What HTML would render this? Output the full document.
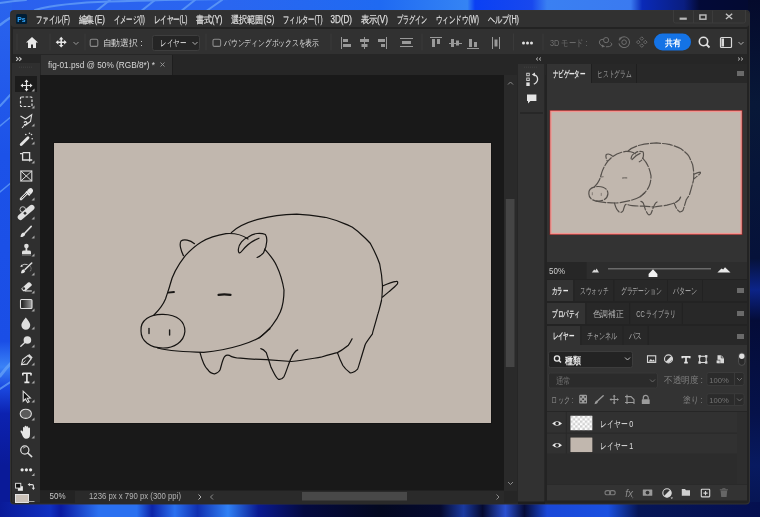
<!DOCTYPE html>
<html><head><meta charset="utf-8"><style>
html,body{margin:0;padding:0;background:#0a2090;overflow:hidden;width:760px;height:517px}
svg{display:block;will-change:transform}
text{font-family:"Liberation Sans",sans-serif}
</style></head><body>
<svg width="760" height="517" viewBox="0 0 760 517">
<defs>
<linearGradient id="wpL" x1="0" y1="0" x2="0" y2="1">
 <stop offset="0" stop-color="#2a64ee"/><stop offset="0.3" stop-color="#1c52e8"/><stop offset="0.66" stop-color="#1a4ee6"/><stop offset="0.71" stop-color="#3a82f6"/><stop offset="0.75" stop-color="#1a48e0"/><stop offset="0.8" stop-color="#0c22b0"/><stop offset="0.9" stop-color="#0a1a98"/><stop offset="1" stop-color="#0a1a98"/></linearGradient>
<linearGradient id="wpB" x1="0" y1="0" x2="1" y2="0">
 <stop offset="0" stop-color="#0a1a98"/><stop offset="0.066" stop-color="#1030c0"/><stop offset="0.08" stop-color="#0a1aa0"/><stop offset="0.13" stop-color="#2a70f0"/><stop offset="0.18" stop-color="#2a70f0"/><stop offset="0.2" stop-color="#0c24a8"/><stop offset="0.23" stop-color="#2a70f0"/><stop offset="0.26" stop-color="#1030b0"/><stop offset="0.3" stop-color="#3080f5"/><stop offset="0.34" stop-color="#0a1a90"/><stop offset="0.4" stop-color="#040a40"/><stop offset="0.5" stop-color="#030820"/><stop offset="0.58" stop-color="#050a30"/><stop offset="0.61" stop-color="#1a3aa0"/><stop offset="0.635" stop-color="#050a30"/><stop offset="0.665" stop-color="#2a50d0"/><stop offset="0.69" stop-color="#060c38"/><stop offset="0.72" stop-color="#1a48d8"/><stop offset="0.8" stop-color="#1a50e0"/><stop offset="0.84" stop-color="#061656"/><stop offset="1" stop-color="#051050"/></linearGradient>
<linearGradient id="wpT" x1="0" y1="0" x2="1" y2="0">
 <stop offset="0" stop-color="#2a60ee"/><stop offset="0.3" stop-color="#2a66f0"/><stop offset="0.5" stop-color="#1f6af2"/><stop offset="0.615" stop-color="#3584f4"/><stop offset="0.625" stop-color="#0a40f4"/><stop offset="0.7" stop-color="#1848ee"/><stop offset="0.72" stop-color="#3a80f2"/><stop offset="0.83" stop-color="#3a7af0"/><stop offset="0.845" stop-color="#0a2ab8"/><stop offset="0.9" stop-color="#0a1e80"/><stop offset="0.92" stop-color="#030a38"/><stop offset="1" stop-color="#030a30"/></linearGradient>
<linearGradient id="wpR" x1="0" y1="0" x2="0" y2="1">
 <stop offset="0" stop-color="#040a2c"/><stop offset="0.2" stop-color="#081838"/><stop offset="0.5" stop-color="#06123a"/><stop offset="0.56" stop-color="#0c2488"/><stop offset="0.62" stop-color="#040c38"/><stop offset="0.8" stop-color="#06124a"/><stop offset="0.9" stop-color="#081a60"/><stop offset="1" stop-color="#061450"/></linearGradient>
</defs>
<rect x="0" y="0" width="760" height="517" fill="#0a2090" />
<rect x="0" y="0" width="760" height="12" fill="url(#wpT)" />
<rect x="0" y="0" width="12" height="517" fill="url(#wpL)" />
<rect x="748" y="0" width="12" height="517" fill="url(#wpR)" />
<rect x="0" y="502" width="760" height="15" fill="url(#wpB)" />
<g fill="none" stroke="#6aa6f8" opacity="0.7" stroke-linecap="round"><path d="M35 10 Q60 3 110 1.5 T230 -1" stroke-width="2"/><path d="M0 3 Q12 1 26 0" stroke-width="2"/><path d="M0 25 Q5 21 10 18" stroke-width="2.5"/><path d="M0 106 L12 93" stroke-width="2"/><path d="M0 126 L12 116" stroke-width="1.5"/><path d="M0 192 L12 182" stroke-width="1.5"/><path d="M0 376 Q6 368 12 362" stroke-width="3"/><path d="M0 389 L12 381" stroke-width="2"/><path d="M95 12 L110 0" stroke-width="2"/><path d="M140 12 L155 0" stroke-width="2"/><path d="M180 12 L195 0" stroke-width="2"/><path d="M205 12 L222 0" stroke-width="2"/></g>
<rect x="10" y="10" width="740" height="494.5" fill="#333333" rx="4"/>
<rect x="11" y="11" width="738" height="492.5" fill="#232323" rx="3"/>
<rect x="11" y="11" width="738" height="16" fill="#313131" rx="3"/>
<rect x="16" y="14" width="11" height="10" fill="#001e36" rx="1.5"/>
<text x="17.3" y="22.2" font-size="7.5" fill="#31a8ff" textLength="8.4" lengthAdjust="spacingAndGlyphs" font-weight="bold" >Ps</text>
<text x="36" y="23" font-size="10" fill="#dedede" textLength="34" lengthAdjust="spacingAndGlyphs" stroke="#dedede" stroke-width="0.25">ファイル(F)</text>
<text x="78.5" y="23" font-size="10" fill="#dedede" textLength="26.5" lengthAdjust="spacingAndGlyphs" stroke="#dedede" stroke-width="0.25">編集(E)</text>
<text x="113.5" y="23" font-size="10" fill="#dedede" textLength="31.5" lengthAdjust="spacingAndGlyphs" stroke="#dedede" stroke-width="0.25">イメージ(I)</text>
<text x="153.5" y="23" font-size="10" fill="#dedede" textLength="34.0" lengthAdjust="spacingAndGlyphs" stroke="#dedede" stroke-width="0.25">レイヤー(L)</text>
<text x="195.5" y="23" font-size="10" fill="#dedede" textLength="27.0" lengthAdjust="spacingAndGlyphs" stroke="#dedede" stroke-width="0.25">書式(Y)</text>
<text x="231" y="23" font-size="10" fill="#dedede" textLength="43.5" lengthAdjust="spacingAndGlyphs" stroke="#dedede" stroke-width="0.25">選択範囲(S)</text>
<text x="283" y="23" font-size="10" fill="#dedede" textLength="39.5" lengthAdjust="spacingAndGlyphs" stroke="#dedede" stroke-width="0.25">フィルター(T)</text>
<text x="330.5" y="23" font-size="10" fill="#dedede" textLength="21.5" lengthAdjust="spacingAndGlyphs" stroke="#dedede" stroke-width="0.25">3D(D)</text>
<text x="360.5" y="23" font-size="10" fill="#dedede" textLength="27.5" lengthAdjust="spacingAndGlyphs" stroke="#dedede" stroke-width="0.25">表示(V)</text>
<text x="397" y="23" font-size="10" fill="#dedede" textLength="30.5" lengthAdjust="spacingAndGlyphs" stroke="#dedede" stroke-width="0.25">プラグイン</text>
<text x="435.5" y="23" font-size="10" fill="#dedede" textLength="43.5" lengthAdjust="spacingAndGlyphs" stroke="#dedede" stroke-width="0.25">ウィンドウ(W)</text>
<text x="487.5" y="23" font-size="10" fill="#dedede" textLength="31.5" lengthAdjust="spacingAndGlyphs" stroke="#dedede" stroke-width="0.25">ヘルプ(H)</text>
<g stroke="#3c3c3c" fill="none" stroke-width="1"><path d="M673.5 10 V21 Q673.5 23 675.5 23 H743.5 Q745.5 23 745.5 21 V10 M693.5 10.5 V23 M712.5 10.5 V23"/></g>
<rect x="679.6" y="17.6" width="7.2" height="2.2" fill="#b8b8b8" />
<rect x="699.9" y="15" width="6" height="4.2" fill="none" stroke="#b8b8b8" stroke-width="1.5"/>
<path d="M725.9 13.7 L732.2 18.9 M732.2 13.7 L725.9 18.9" stroke="#c4c4c4" fill="none" stroke-width="1.3" />
<rect x="13" y="29" width="734" height="25.3" fill="#313131" />
<rect x="16.5" y="33.5" width="1" height="17" fill="#3a3a3a" />
<rect x="49.5" y="33.5" width="1" height="17" fill="#3a3a3a" />
<rect x="84.5" y="33.5" width="1" height="17" fill="#3a3a3a" />
<rect x="205.5" y="33.5" width="1" height="17" fill="#3a3a3a" />
<rect x="330.5" y="33.5" width="1" height="17" fill="#3a3a3a" />
<rect x="421.5" y="33.5" width="1" height="17" fill="#3a3a3a" />
<rect x="513" y="33.5" width="1" height="17" fill="#3a3a3a" />
<rect x="542.5" y="33.5" width="1" height="17" fill="#3a3a3a" />
<path d="M32 37 L26 42.5 H28 V48 H31 V44.5 H33 V48 H36 V42.5 H38 Z" stroke="none" fill="#e8e8e8" stroke-width="1" />
<path d="M61.2 38.5 V46 M57 42.2 H65.5" stroke="#e8e8e8" fill="none" stroke-width="1.5" />
<path d="M61.2 36.8 L58.9 39.4 H63.5Z M61.2 47.5 L58.9 44.9 H63.5Z M55.7 42.2 L58.3 39.9 V44.5Z M66.7 42.2 L64.1 39.9 V44.5Z" stroke="none" fill="#e8e8e8" stroke-width="1" />
<path d="M73.5 42 L76 44.5 L78.5 42" stroke="#9a9a9a" fill="none" stroke-width="1" />
<rect x="90.2" y="39.2" width="7.6" height="7.2" fill="none" stroke="#8a8a8a" stroke-width="1.1" rx="1.5"/>
<text x="102.6" y="46.2" font-size="9" fill="#dcdcdc" textLength="40.2" lengthAdjust="spacingAndGlyphs" >自動選択 :</text>
<rect x="152.5" y="35.5" width="47" height="15" fill="#252525" stroke="#3e3e3e" stroke-width="1" rx="2"/>
<text x="160" y="46.2" font-size="9" fill="#dcdcdc" textLength="26" lengthAdjust="spacingAndGlyphs" >レイヤー</text>
<path d="M192.5 42 L195 44.5 L197.5 42" stroke="#b0b0b0" fill="none" stroke-width="1" />
<rect x="213" y="39.2" width="7.6" height="7.2" fill="none" stroke="#8a8a8a" stroke-width="1.1" rx="1.5"/>
<text x="224" y="46.2" font-size="9" fill="#dcdcdc" textLength="95" lengthAdjust="spacingAndGlyphs" >バウンディングボックスを表示</text>
<g fill="#999999">
<rect x="341" y="37" width="1" height="12" fill="#999999" />
<rect x="343" y="39" width="5" height="3" fill="#999999" />
<rect x="343" y="44" width="8" height="3" fill="#999999" />
<rect x="364" y="37" width="1" height="12" fill="#999999" />
<rect x="360" y="39" width="9" height="3" fill="#999999" />
<rect x="361.5" y="44" width="6" height="3" fill="#999999" />
<rect x="386" y="37" width="1" height="12" fill="#999999" />
<rect x="378" y="39" width="7" height="3" fill="#999999" />
<rect x="381" y="44" width="4" height="3" fill="#999999" />
<rect x="400" y="38" width="13" height="1" fill="#999999" />
<rect x="402" y="41" width="9" height="3" fill="#999999" />
<rect x="400" y="46" width="13" height="1" fill="#999999" />
<rect x="430" y="37" width="12" height="1" fill="#999999" />
<rect x="432" y="39" width="3" height="8" fill="#999999" />
<rect x="437" y="39" width="3" height="5" fill="#999999" />
<rect x="449" y="43" width="13" height="1" fill="#999999" />
<rect x="451" y="39" width="3" height="8" fill="#999999" />
<rect x="456" y="40.5" width="3" height="5" fill="#999999" />
<rect x="467" y="48" width="12" height="1" fill="#999999" />
<rect x="469" y="39" width="3" height="8" fill="#999999" />
<rect x="474" y="42" width="3" height="5" fill="#999999" />
<rect x="492" y="37" width="1" height="12" fill="#999999" />
<rect x="494.5" y="39.5" width="3" height="7" fill="#999999" />
<rect x="499" y="37" width="1" height="12" fill="#999999" />
</g>
<circle cx="523.5" cy="43" r="1.5" fill="#e0e0e0"/>
<circle cx="527.5" cy="43" r="1.5" fill="#e0e0e0"/>
<circle cx="531.5" cy="43" r="1.5" fill="#e0e0e0"/>
<text x="550" y="46.2" font-size="9" fill="#707070" textLength="37.5" lengthAdjust="spacingAndGlyphs" >3D モード :</text>
<circle cx="606.1" cy="40.1" r="2.6" stroke="#6e6e6e" fill="none" stroke-width="1"/>
<path d="M603.6 39.2 Q599.5 39 599.3 42 Q599.2 44.5 602 45.8 M606 46.8 Q610 47.2 611.6 45.2 Q612.5 43.6 610.5 42.5" stroke="#6e6e6e" fill="none" stroke-width="1" />
<path d="M602 44.6 L605.2 46.4 L601.8 47.6Z" stroke="none" fill="#6e6e6e" stroke-width="1" />
<circle cx="624.1" cy="42.2" r="5.4" stroke="#6e6e6e" fill="none" stroke-width="1" stroke-dasharray="30 4" transform="rotate(200 624.1 42.2)"/><circle cx="624.1" cy="42.2" r="2.3" stroke="#6e6e6e" fill="none" stroke-width="1"/>
<path d="M619.3 37.6 L621.9 37.9 L619.6 40.4Z" stroke="none" fill="#6e6e6e" stroke-width="1" />
<path d="M641.8 36.8 l1.8 1.8 l-1.8 1.8 l-1.8 -1.8z M641.8 43.8 l1.8 1.8 l-1.8 1.8 l-1.8 -1.8z M638.3 40.3 l1.8 1.8 l-1.8 1.8 l-1.8 -1.8z M645.3 40.3 l1.8 1.8 l-1.8 1.8 l-1.8 -1.8z" stroke="#6e6e6e" fill="none" stroke-width="0.9" />
<rect x="654" y="33.5" width="37" height="17" fill="#1473e6" rx="8.5"/>
<text x="672.5" y="45.6" font-size="9" fill="#ffffff" textLength="16" lengthAdjust="spacingAndGlyphs" text-anchor="middle" font-weight="bold" >共有</text>
<circle cx="703.5" cy="41.5" r="4.2" stroke="#e0e0e0" fill="none" stroke-width="1.6"/>
<path d="M706.5 44.5 L709.5 47.5" stroke="#e0e0e0" fill="none" stroke-width="1.8" />
<rect x="720.5" y="37.5" width="11" height="10" fill="none" stroke="#d8d8d8" stroke-width="1.2" rx="1"/>
<rect x="721.5" y="38.5" width="2.5" height="8" fill="#d8d8d8" />
<path d="M738.5 42 L741 44.5 L743.5 42" stroke="#b0b0b0" fill="none" stroke-width="1" />
<rect x="13" y="55" width="734" height="20" fill="#262626" />
<rect x="13" y="55" width="26" height="8" fill="#262626" />
<path d="M16.2 57.2 l2 1.8 l-2 1.8 M19.2 57.2 l2 1.8 l-2 1.8" stroke="#c8c8c8" fill="none" stroke-width="1.1" />
<rect x="41" y="55" width="131" height="20" fill="#323232" />
<rect x="172" y="55" width="1" height="20" fill="#1e1e1e" />
<text x="48" y="67.7" font-size="8.7" fill="#d8d8d8" textLength="107" lengthAdjust="spacingAndGlyphs" >fig-01.psd @ 50% (RGB/8*) *</text>
<path d="M160.5 62.5 L164.5 66.5 M164.5 62.5 L160.5 66.5" stroke="#9a9a9a" fill="none" stroke-width="0.9" />
<rect x="12" y="63" width="28" height="439.5" fill="#2f2f2f" />
<path d="M19 67.2 H33" stroke="#404040" fill="none" stroke-width="1" stroke-dasharray="1 1"/>
<rect x="15" y="76" width="22" height="16" fill="#1c1c1c" />
<path d="M26.5 80.5 V90.5 M21.5 85.5 H31.5" stroke="#e8e8e8" fill="none" stroke-width="1.2" />
<path d="M26.5 79.5 L24.5 82 H28.5Z M26.5 91.5 L24.5 89 H28.5Z M20.5 85.5 L23 83.5 V87.5Z M32.5 85.5 L30 83.5 V87.5Z" stroke="none" fill="#e8e8e8" stroke-width="1" />
<path d="M34.5 88.5 L34.5 91.5 L31.5 91.5Z" stroke="none" fill="#a8a8a8" stroke-width="1" />
<rect x="20.5" y="97" width="11.5" height="9.5" fill="none" stroke="#dedede" stroke-width="1.2" stroke-dasharray="2.6 1.5" rx="1"/>
<path d="M34.5 105.5 L34.5 108.5 L31.5 108.5Z" stroke="none" fill="#a8a8a8" stroke-width="1" />
<path d="M20.5 116 L25.5 119 L31.7 114.8 L30.5 121.5 L25 125.5 M23.8 122.5 q2.5-2 3.2 0.5 q-0.5 2 -3 1.5 M25 124.5 L22 128" stroke="#dedede" fill="none" stroke-width="1.1" />
<path d="M34.5 123.5 L34.5 126.5 L31.5 126.5Z" stroke="none" fill="#a8a8a8" stroke-width="1" />
<path d="M21.2 144.5 L28 137.8" stroke="#e4e4e4" fill="none" stroke-width="2.8" stroke-linecap="round"/>
<circle cx="25.8" cy="134.5" r="0.8" fill="#dedede"/>
<circle cx="31.5" cy="134.5" r="0.8" fill="#dedede"/>
<circle cx="32.2" cy="138.8" r="0.8" fill="#dedede"/>
<circle cx="29.5" cy="133.2" r="0.8" fill="#dedede"/>
<path d="M34.5 141.5 L34.5 144.5 L31.5 144.5Z" stroke="none" fill="#a8a8a8" stroke-width="1" />
<path d="M20 153.7 H22.6 V160 H32.2 M22.6 152.6 H29.6 V161.5" stroke="#e0e0e0" fill="none" stroke-width="1.3" />
<path d="M34.5 160.5 L34.5 163.5 L31.5 163.5Z" stroke="none" fill="#a8a8a8" stroke-width="1" />
<rect x="20.8" y="171" width="11" height="10" fill="none" stroke="#dedede" stroke-width="1.1"/>
<path d="M20.8 171 L31.8 181 M31.8 171 L20.8 181" stroke="#dedede" fill="none" stroke-width="1" />
<path d="M21 199 L27.5 192.5" stroke="#dedede" fill="none" stroke-width="2.6" stroke-linecap="round"/>
<path d="M21.7 198.3 L27 193" stroke="#2f2f2f" stroke-width="0.9"/>
<path d="M26 191.6 L29.8 195.4 M28.3 190.5 Q30.5 188 31.7 189.5 Q33 191 30.5 193.2Z" stroke="#e6e6e6" fill="#e6e6e6" stroke-width="1.8" />
<path d="M34.5 197.5 L34.5 200.5 L31.5 200.5Z" stroke="none" fill="#a8a8a8" stroke-width="1" />
<circle cx="22.8" cy="209.5" r="2.8" stroke="#cfcfcf" fill="none" stroke-width="0.9"/>
<path d="M20.5 217.2 L31.7 207.6" stroke="#dedede" fill="none" stroke-width="5.6" stroke-linecap="round"/>
<path d="M25 211.5 l1.8 1.8 l-1.8 1.8 l-1.8-1.8z" stroke="none" fill="#2f2f2f" stroke-width="1" />
<path d="M34.5 216.5 L34.5 219.5 L31.5 219.5Z" stroke="none" fill="#a8a8a8" stroke-width="1" />
<path d="M24.2 233.8 L31.2 226.4" stroke="#dedede" fill="none" stroke-width="1.6" stroke-linecap="round"/>
<path d="M20.5 237 Q20.8 233 23.5 232.5 L25.2 234.2 Q24.5 237 20.5 237Z" stroke="none" fill="#e4e4e4" stroke-width="1" />
<path d="M34.5 235.5 L34.5 238.5 L31.5 238.5Z" stroke="none" fill="#a8a8a8" stroke-width="1" />
<circle cx="26.4" cy="246" r="2.3" fill="#dedede"/>
<rect x="25.5" y="247.5" width="1.8" height="3.5" fill="#dedede" />
<path d="M22 254 V252 Q22 250.6 24 250.6 H29 Q31 250.6 31 252 V254Z" stroke="none" fill="#dedede" stroke-width="1" />
<rect x="22" y="254.5" width="9" height="0.9" fill="#a0a0a0" />
<path d="M34.5 253.5 L34.5 256.5 L31.5 256.5Z" stroke="none" fill="#a8a8a8" stroke-width="1" />
<path d="M25 269.5 L31.7 263" stroke="#dedede" fill="none" stroke-width="1.6" stroke-linecap="round"/>
<path d="M21 273.2 Q21.2 269.8 23.6 269.3 L25.2 270.9 Q24.6 273.3 21 273.2Z" stroke="none" fill="#e4e4e4" stroke-width="1" />
<path d="M21 265.8 Q24 263.5 27.5 264.5" stroke="#cfcfcf" fill="none" stroke-width="0.9" />
<path d="M20 266.5 l2-2 l0.6 2.6z" stroke="none" fill="#dedede" stroke-width="1" />
<path d="M30.5 266.5 Q32 269 30 271.5" stroke="#bdbdbd" fill="none" stroke-width="0.8" stroke-dasharray="1 1"/>
<path d="M34.5 272.5 L34.5 275.5 L31.5 275.5Z" stroke="none" fill="#a8a8a8" stroke-width="1" />
<path d="M21.2 288.8 L28 282.6 Q29 281.8 30 282.6 L31.6 284.2 Q32.2 285 31.4 285.8 L25.2 291.2 H23.2Z" stroke="none" fill="#e0e0e0" stroke-width="1" />
<circle cx="23.8" cy="288.6" r="1.3" fill="#2f2f2f"/>
<rect x="25" y="290.4" width="6.8" height="1.1" fill="#dedede" />
<path d="M34.5 290.5 L34.5 293.5 L31.5 293.5Z" stroke="none" fill="#a8a8a8" stroke-width="1" />
<defs><linearGradient id="grd" x1="0" y1="0" x2="1" y2="0"><stop offset="0" stop-color="#141414"/><stop offset="1" stop-color="#a0a0a0"/></linearGradient></defs>
<rect x="20.5" y="299.5" width="11.5" height="9" fill="url(#grd)" stroke="#dedede" stroke-width="1.1" rx="1"/>
<path d="M34.5 308.5 L34.5 311.5 L31.5 311.5Z" stroke="none" fill="#a8a8a8" stroke-width="1" />
<path d="M25.8 317.4 Q30.6 323 30.2 325.3 A4.2 4.2 0 0 1 21.4 325.3 Q21 323 25.8 317.4Z" stroke="none" fill="#dedede" stroke-width="1" />
<path d="M34.5 326.5 L34.5 329.5 L31.5 329.5Z" stroke="none" fill="#a8a8a8" stroke-width="1" />
<circle cx="27.4" cy="340" r="3.8" fill="#dedede"/>
<path d="M20.8 346.3 L24.8 342.6" stroke="#dedede" fill="none" stroke-width="1.3" stroke-linecap="round"/>
<path d="M34.5 344.5 L34.5 347.5 L31.5 347.5Z" stroke="none" fill="#a8a8a8" stroke-width="1" />
<path d="M21.5 364.6 L22.6 359.6 L28 355.5 L31.2 358.7 L27.1 364.1Z" stroke="#dedede" fill="none" stroke-width="1.1" />
<path d="M28.6 354.6 L32.1 358.1" stroke="#dedede" fill="none" stroke-width="1.6" />
<path d="M21.7 364.4 L25.5 360.6" stroke="#dedede" fill="none" stroke-width="0.8" />
<path d="M34.5 362.5 L34.5 365.5 L31.5 365.5Z" stroke="none" fill="#a8a8a8" stroke-width="1" />
<path d="M22.6 373.2 H31.2 M22.8 373 V375.6 M31 373 V375.6 M26.9 373.2 V382.4 M24.4 382.4 H29.4" stroke="#e8e8e8" fill="none" stroke-width="1.6" />
<path d="M34.5 380.5 L34.5 383.5 L31.5 383.5Z" stroke="none" fill="#a8a8a8" stroke-width="1" />
<path d="M23.2 391.2 V401.2 L25.4 399 L27.6 402.6 L29.2 401.8 L27.2 398.3 L30.4 398Z" stroke="#dedede" fill="#111111" stroke-width="1.1" />
<path d="M34.5 399.5 L34.5 402.5 L31.5 402.5Z" stroke="none" fill="#a8a8a8" stroke-width="1" />
<ellipse cx="25.8" cy="413.8" rx="5.6" ry="4.6" fill="#5a5a5a" stroke="#dedede" stroke-width="1.1"/>
<path d="M34.5 417.5 L34.5 420.5 L31.5 420.5Z" stroke="none" fill="#a8a8a8" stroke-width="1" />
<path d="M21.6 433.5 L20.8 432.2 Q20 431 21 430.6 Q22 430.3 23 431.8 V427.8 Q23 427 23.8 427 Q24.6 427 24.6 427.8 V426.6 Q24.6 425.8 25.5 425.8 Q26.4 425.8 26.4 426.6 V427 Q26.4 426.2 27.3 426.2 Q28.2 426.2 28.2 427 V428.4 Q28.2 427.6 29.1 427.6 Q30 427.6 30 428.4 V434.4 Q30 438.8 26 438.8 Q23.4 438.8 21.6 433.5Z" stroke="none" fill="#e6e6e6" stroke-width="1" />
<path d="M34.5 435.5 L34.5 438.5 L31.5 438.5Z" stroke="none" fill="#a8a8a8" stroke-width="1" />
<circle cx="24.8" cy="450" r="4.1" stroke="#dedede" fill="none" stroke-width="1.2"/>
<path d="M27.8 453 L31.7 456.6" stroke="#dedede" fill="none" stroke-width="1.5" stroke-linecap="round"/>
<path d="M23 448.3 Q24 447.2 25.4 447.4" stroke="#cfcfcf" fill="none" stroke-width="0.8" />
<circle cx="22.1" cy="469.8" r="1.6" fill="#e6e6e6"/>
<circle cx="26.4" cy="469.8" r="1.6" fill="#e6e6e6"/>
<circle cx="30.6" cy="469.8" r="1.6" fill="#e6e6e6"/>
<path d="M34.5 473.0 L34.5 476.0 L31.5 476.0Z" stroke="none" fill="#a8a8a8" stroke-width="1" />
<rect x="17.9" y="486.2" width="5" height="4.6" fill="#e8e8e8" />
<rect x="15.6" y="483.3" width="5.2" height="4.8" fill="#111111" stroke="#e8e8e8" stroke-width="0.9"/>
<path d="M29.6 484.6 H32.2 Q33.4 484.6 33.4 485.8 V488" stroke="#e0e0e0" fill="none" stroke-width="1.1" />
<path d="M27.6 484.6 L29.9 482.9 V486.3Z M33.4 490 L31.7 487.7 H35.1Z" stroke="none" fill="#e0e0e0" stroke-width="1" />
<rect x="15.5" y="494.5" width="13" height="8" fill="#c9c0b7" stroke="#eeeeee" stroke-width="0.9"/>
<rect x="28.5" y="501" width="6" height="1" fill="#a0a0a0" />
<rect x="40" y="75" width="464" height="416" fill="#191919" />
<rect x="53" y="142" width="439" height="282" fill="#141414" />
<rect x="54" y="143" width="437" height="280" fill="#c1b7ae" />
<rect x="504" y="75" width="13.5" height="416" fill="#2a2a2a" />
<path d="M508 84.5 L510.5 82 L513 84.5" stroke="#8a8a8a" fill="none" stroke-width="1" />
<rect x="505.8" y="199" width="8.7" height="168" fill="#454545" />
<path d="M508 482 L510.5 484.5 L513 482" stroke="#8a8a8a" fill="none" stroke-width="1" />
<rect x="40" y="490.5" width="464" height="12.5" fill="#2a2a2a" />
<rect x="40" y="490.5" width="35" height="12.5" fill="#232323" />
<text x="49.5" y="499.3" font-size="9" fill="#c8c8c8" textLength="16" lengthAdjust="spacingAndGlyphs" >50%</text>
<text x="89" y="499.3" font-size="9" fill="#b4b4b4" textLength="92" lengthAdjust="spacingAndGlyphs" >1236 px x 790 px (300 ppi)</text>
<path d="M198.5 494.5 L201 497 L198.5 499.5" stroke="#b0b0b0" fill="none" stroke-width="1" />
<path d="M213 494.5 L210.5 497 L213 499.5" stroke="#8a8a8a" fill="none" stroke-width="1" />
<rect x="302" y="492" width="105" height="8.5" fill="#484848" />
<path d="M496.5 494.5 L499 497 L496.5 499.5" stroke="#8a8a8a" fill="none" stroke-width="1" />
<rect x="504" y="491" width="14" height="12" fill="#262626" />
<g fill="none" stroke="#1a1816" stroke-width="1.25" stroke-linecap="round" stroke-linejoin="round" id="pig">
<path d="M154 315 C159 310 163 305 165.5 299 C167 294 169 289 170 285 C172 276 178 265 185.3 255.6 C195 245 205 237 226 233.6 C236 233 244 236 248 239" stroke="#151311" fill="none" stroke-width="1.2" vector-effect="non-scaling-stroke"/>
<path d="M194.5 243.7 C190 240 184 239 181 241 C179 244 181 251 183.4 255.6" stroke="#151311" fill="none" stroke-width="1.2" vector-effect="non-scaling-stroke"/>
<path d="M231.3 232.6 C236 228 244 223 260 218.8 C275 215 296.8 214.2 296.8 214.2 C310 215 326 217.5 326.3 217.5 C340 221 352 227 352.1 227.1 C362 234 370 243 370.5 243.7 C375 252 379 262 379.7 264 C382 275 382.5 286 382.5 286 C382 300 381.6 300 381.6 300 C380 307 378 314 377.9 313.9 C375 325 372 334 372.3 334.2 C368 340 365 345 365 345.2 C361 358 358 369 357.6 369.2 C354 373 350 373 350.3 372.9 C345 369 342.9 365.5 342.9 365.5 C340 360 337.4 352.6 337.4 352.6" stroke="#151311" fill="none" stroke-width="1.2" vector-effect="non-scaling-stroke"/>
<path d="M259 238.2 C252 241 245 247 241.5 251.5 C239.5 254 238 253 238.4 249 C239 244 243 239 247.9 237.2 C251 235 254 233.8 257.1 233.5 C262 233 265.4 234.5 265.4 234.5 C267 237 267 239 266.7 241.8 C266.5 247 265 250 263.5 252.9 C261 255.5 259 256.8 257.1 257.5" stroke="#151311" fill="none" stroke-width="1.2" vector-effect="non-scaling-stroke"/>
<path d="M264.6 249.2 C270 255 275 262 276.6 265.8 C281 275 283 284 284 290 C284 300 282 308 280.3 312.1 C277 320 273 324 271 326.8 C266 332 262 336 258.9 337.9" stroke="#151311" fill="none" stroke-width="1.2" vector-effect="non-scaling-stroke"/>
<path d="M141 331 C140 320 150 314 163 314.3 C178 314.5 185 322 184.9 331.4 C184 342 174 348 163 348 C150 348 141 341 141 331 Z" stroke="#151311" fill="none" stroke-width="1.2" vector-effect="non-scaling-stroke"/>
<path d="M157.6 348 C170 351 185 352 203.7 352.3 C220 351 235 347 240.5 345.3 C248 343 255 340 258.9 337.9 C263 335 267 331 270 328.7" stroke="#151311" fill="none" stroke-width="1.2" vector-effect="non-scaling-stroke"/>
<path d="M200 352.6 C202 360 205 367 207.4 369.2 C210 373 212 374 214.7 373.8 C218 373 220 370 220.3 369.2 C222 363 223 358 224.9 356.3 C226 355 228 355 229.5 355.4 C232 357 236 358 240.5 358.2 C250 359 260 359.6 266.3 359.6 L291.3 361.5 C305 360 315 358 320.8 357.2 C328 355 335 353 337.4 352.6 C343 350 346 347 348.4 345.2 C350 343 351 341 352.1 338.8" stroke="#151311" fill="none" stroke-width="1.2" vector-effect="non-scaling-stroke"/>
<path d="M260.8 348.6 C263 349 265 351 266.3 352.6 C268 358 270 364 271 367.3 C274 373 276 378 278.4 379.3 C281 380 283 378 284 376.6 C287 370 289 362 291.3 358.1 C293 354 295 351 297.8 349.9" stroke="#151311" fill="none" stroke-width="1.2" vector-effect="non-scaling-stroke"/>
<path d="M382.5 286 C387 284 392 282 396.3 281.4 C398 281 398 283 397.2 284.2 C395 287 391 290 389 291.6 C386 294 384 296 382.5 297.1" stroke="#151311" fill="none" stroke-width="1.2" vector-effect="non-scaling-stroke"/>
<path d="M168 292.6 L174 292" stroke="#1a1816" fill="none" stroke-width="1.8" />
<path d="M218.5 294.8 Q224 294 230.5 294.8" stroke="#1a1816" fill="none" stroke-width="2.2" />
<path d="M149 328.5 V333.5" stroke="#1a1816" fill="none" stroke-width="1.4" />
<path d="M169.6 330 V335" stroke="#1a1816" fill="none" stroke-width="1.4" />
</g>
<rect x="518" y="55" width="27" height="449" fill="#1e1e1e" />
<rect x="518" y="55" width="229" height="9" fill="#262626" />
<path d="M538 57.5 l-1.8 1.5 l1.8 1.5 M541 57.5 l-1.8 1.5 l1.8 1.5" stroke="#c0c0c0" fill="none" stroke-width="0.9" />
<path d="M738 57.5 l1.8 1.5 l-1.8 1.5 M741 57.5 l1.8 1.5 l-1.8 1.5" stroke="#c0c0c0" fill="none" stroke-width="0.9" />
<rect x="518" y="64" width="26.5" height="437.5" fill="#313131" />
<rect x="520" y="112.5" width="23" height="1" fill="#1f1f1f" />
<path d="M524 67.2 H538" stroke="#404040" fill="none" stroke-width="1" stroke-dasharray="1 1"/>
<rect x="526.3" y="72.8" width="3.4" height="3.4" fill="#d8d8d8" />
<rect x="527.2" y="73.7" width="1.6" height="1.6" fill="#2e2e2e" />
<rect x="526.3" y="77.6" width="3.4" height="3.4" fill="#d8d8d8" />
<rect x="527.2" y="78.5" width="1.6" height="1.6" fill="#2e2e2e" />
<rect x="526.3" y="82.4" width="3.4" height="3.6" fill="#e0e0e0" />
<path d="M534 74.8 Q537.6 75.5 537.6 79.2 Q537.4 82.6 533.8 84.2" stroke="#e0e0e0" fill="none" stroke-width="1.3" />
<path d="M531.8 74.6 L535 72.6 L534.8 76.6Z" stroke="none" fill="#e0e0e0" stroke-width="1" />
<path d="M527 94.4 h9.4 v6.6 h-6 l-2.4 2.6 v-2.6 h-1 z" stroke="none" fill="#e6e6e6" stroke-width="1" />
<rect x="546" y="64" width="202" height="437" fill="#232323" />
<rect x="547" y="64" width="200" height="198" fill="#333333" />
<rect x="547" y="64" width="200" height="19" fill="#282828" />
<rect x="547" y="64" width="44" height="19" fill="#333333" />
<text x="552.6" y="76.7" font-size="9.2" fill="#e8e8e8" textLength="32.8" lengthAdjust="spacingAndGlyphs" font-weight="bold" >ナビゲーター</text>
<text x="597.2" y="76.7" font-size="9.2" fill="#9a9a9a" textLength="34.5" lengthAdjust="spacingAndGlyphs" >ヒストグラム</text>
<rect x="591" y="64" width="1" height="19" fill="#1f1f1f" />
<rect x="636" y="64" width="1" height="19" fill="#1f1f1f" />
<rect x="737" y="71" width="7" height="5" fill="#6a6a6a" />
<rect x="549.5" y="110" width="193" height="125" fill="#8a2424" />
<rect x="550.2" y="110.7" width="191.6" height="123.6" fill="#f29490" />
<rect x="551.6" y="112.1" width="188.8" height="120.8" fill="#c1b7ae" />
<g transform="translate(551,112) scale(0.4348) translate(-54,-143)" opacity="0.62" stroke-dasharray="10 2"><use href="#pig"/></g>
<rect x="547" y="262" width="200" height="17" fill="#2d2d2d" />
<rect x="547" y="262" width="39.6" height="17" fill="#262626" />
<text x="549" y="273.5" font-size="9" fill="#d0d0d0" textLength="16" lengthAdjust="spacingAndGlyphs" >50%</text>
<path d="M591.8 272.5 L594.2 269.6 L595.4 270.4 L596.6 268.6 L599 272.5 Z" stroke="none" fill="#d8d8d8" stroke-width="1" />
<rect x="608" y="268" width="103" height="1.5" fill="#6a6a6a" />
<path d="M648.6 277 V274 L653 269.2 L657.4 274 V277 Z" stroke="none" fill="#f0f0f0" stroke-width="1" />
<path d="M717.4 272.6 L721.5 268.4 L723.2 269.6 L725 267.2 L730.5 272.6 Z" stroke="none" fill="#e8e8e8" stroke-width="1" />
<rect x="547" y="280" width="200" height="21" fill="#282828" />
<rect x="547" y="280" width="26.4" height="21" fill="#333333" />
<text x="552.0" y="294.2" font-size="9.2" fill="#e8e8e8" textLength="16.1" lengthAdjust="spacingAndGlyphs" font-weight="bold" >カラー</text>
<rect x="573.4" y="280" width="1" height="21" fill="#222222" />
<text x="580.0" y="294.2" font-size="9.2" fill="#b0b0b0" textLength="28.6" lengthAdjust="spacingAndGlyphs" >スウォッチ</text>
<rect x="613.4" y="280" width="1" height="21" fill="#222222" />
<text x="620.8000000000001" y="294.2" font-size="9.2" fill="#b0b0b0" textLength="40.8" lengthAdjust="spacingAndGlyphs" >グラデーション</text>
<rect x="667" y="280" width="1" height="21" fill="#222222" />
<text x="672.6" y="294.2" font-size="9.2" fill="#b0b0b0" textLength="24.4" lengthAdjust="spacingAndGlyphs" >パターン</text>
<rect x="702" y="280" width="1" height="21" fill="#222222" />
<rect x="737" y="288" width="7" height="5" fill="#6a6a6a" />
<rect x="547" y="303" width="200" height="21" fill="#282828" />
<rect x="547" y="303" width="38.4" height="21" fill="#333333" />
<text x="552.0" y="316.8" font-size="9.2" fill="#e8e8e8" textLength="28.1" lengthAdjust="spacingAndGlyphs" font-weight="bold" >プロパティ</text>
<rect x="585.4" y="303" width="1" height="21" fill="#222222" />
<text x="592.6" y="316.8" font-size="9.2" fill="#b0b0b0" textLength="31.1" lengthAdjust="spacingAndGlyphs" >色調補正</text>
<rect x="629.2" y="303" width="1" height="21" fill="#222222" />
<text x="636.2" y="316.8" font-size="9.2" fill="#b0b0b0" textLength="39.3" lengthAdjust="spacingAndGlyphs" >CC ライブラリ</text>
<rect x="681.8" y="303" width="1" height="21" fill="#222222" />
<rect x="737" y="311" width="7" height="5" fill="#6a6a6a" />
<rect x="547" y="326" width="200" height="19" fill="#282828" />
<rect x="547" y="326" width="33.4" height="19" fill="#333333" />
<text x="552.6" y="339.3" font-size="9.2" fill="#e8e8e8" textLength="21.8" lengthAdjust="spacingAndGlyphs" font-weight="bold" >レイヤー</text>
<rect x="580.4" y="326" width="1" height="19" fill="#222222" />
<text x="586.7" y="339.3" font-size="9.2" fill="#b0b0b0" textLength="30.3" lengthAdjust="spacingAndGlyphs" >チャンネル</text>
<rect x="622.5" y="326" width="1" height="19" fill="#222222" />
<text x="628.8000000000001" y="339.3" font-size="9.2" fill="#b0b0b0" textLength="13.4" lengthAdjust="spacingAndGlyphs" >パス</text>
<rect x="647.7" y="326" width="1" height="19" fill="#222222" />
<rect x="737" y="334" width="7" height="5" fill="#6a6a6a" />
<rect x="547" y="345" width="200" height="139" fill="#333333" />
<rect x="547" y="411" width="190" height="73" fill="#2c2c2c" />
<rect x="548.5" y="351.5" width="84" height="16" fill="#232323" stroke="#3c3c3c" stroke-width="1" rx="2"/>
<circle cx="557" cy="358.5" r="2.6" stroke="#e8e8e8" fill="none" stroke-width="1.3"/>
<path d="M559 360.5 L561 362.5" stroke="#e8e8e8" fill="none" stroke-width="1.5" />
<text x="565" y="363.5" font-size="10" fill="#e8e8e8" textLength="16" lengthAdjust="spacingAndGlyphs" font-weight="bold" >種類</text>
<path d="M625 357.5 L627.5 360 L630 357.5" stroke="#c0c0c0" fill="none" stroke-width="1" />
<rect x="647.5" y="355.8" width="8.2" height="6.6" fill="none" stroke="#d8d8d8" stroke-width="1.1"/>
<path d="M648.6 361.6 l2.2-2.6 l1.6 1.6 l1.2-1 l1.4 2z" stroke="none" fill="#d8d8d8" stroke-width="1" />
<circle cx="668.5" cy="358.9" r="4" fill="none" stroke="#d8d8d8" stroke-width="1.1"/>
<path d="M671.3 356.1 A4 4 0 0 1 665.7 361.7 Z" stroke="none" fill="#d8d8d8" stroke-width="1" />
<path d="M682 356.9 H690 M682.3 356 V358.2 M689.7 356 V358.2 M686 356.9 V362.9 M684.2 362.6 H687.8" stroke="#e4e4e4" fill="none" stroke-width="1.7" />
<rect x="699.6" y="356.3" width="6.6" height="6.2" fill="none" stroke="#d8d8d8" stroke-width="1.1"/>
<rect x="698.4" y="355.1" width="2.4" height="2.4" fill="#d8d8d8" />
<rect x="705.0" y="355.1" width="2.4" height="2.4" fill="#d8d8d8" />
<rect x="698.4" y="361.3" width="2.4" height="2.4" fill="#d8d8d8" />
<rect x="705.0" y="361.3" width="2.4" height="2.4" fill="#d8d8d8" />
<path d="M717.5 355.2 h3.8 l2.7 2.7 v5.3 h-6.5z" stroke="none" fill="#d8d8d8" stroke-width="1" />
<path d="M721.3 355.2 v2.7 h2.7" stroke="#333333" fill="none" stroke-width="0.7" />
<rect x="716" y="359.8" width="4.2" height="3.4" fill="#333333" />
<rect x="716.6" y="360.4" width="3.2" height="2.8" fill="#d8d8d8" />
<rect x="738.6" y="353" width="6.4" height="12.4" fill="#2a2a2a" stroke="#505050" stroke-width="1" rx="3.2"/>
<circle cx="741.8" cy="356.3" r="2.7" fill="#e0e0e0"/>
<rect x="548.5" y="373" width="109" height="15" fill="#2b2b2b" stroke="#383838" stroke-width="1" rx="2"/>
<text x="555.5" y="384.4" font-size="9" fill="#6e6e6e" textLength="15" lengthAdjust="spacingAndGlyphs" >通常</text>
<path d="M650 379.5 L652.5 382 L655 379.5" stroke="#6a6a6a" fill="none" stroke-width="1" />
<text x="664.1" y="382.9" font-size="9" fill="#808080" textLength="38.8" lengthAdjust="spacingAndGlyphs" >不透明度 :</text>
<rect x="706.8" y="372.5" width="37.3" height="13" fill="#2b2b2b" stroke="#3a3a3a" stroke-width="1" rx="2"/>
<rect x="734" y="372.5" width="1" height="13" fill="#3a3a3a" />
<text x="709.2" y="382.5" font-size="8" fill="#747474" textLength="19.5" lengthAdjust="spacingAndGlyphs" >100%</text>
<path d="M737 378 L739.5 380.5 L742 378" stroke="#6a6a6a" fill="none" stroke-width="1" />
<text x="551.3" y="403.4" font-size="9" fill="#8a8a8a" textLength="22.2" lengthAdjust="spacingAndGlyphs" >ロック :</text>
<rect x="579.2" y="394.8" width="7.8" height="8.8" fill="#9c9c9c" rx="1.2"/>
<circle cx="581" cy="396.8" r="0.9" fill="#333333"/>
<circle cx="585.2" cy="396.8" r="0.9" fill="#333333"/>
<circle cx="583.1" cy="399.2" r="0.9" fill="#333333"/>
<circle cx="581" cy="401.4" r="0.9" fill="#333333"/>
<circle cx="585.2" cy="401.4" r="0.9" fill="#333333"/>
<path d="M597.5 401 L603.2 395.8" stroke="#9c9c9c" fill="none" stroke-width="1.4" stroke-linecap="round"/>
<path d="M594.5 404.2 Q594.8 401 596.8 400.4 L598.2 401.8 Q597.6 404 594.5 404.2Z" stroke="none" fill="#9c9c9c" stroke-width="1" />
<path d="M614.2 395.5 V403.5 M610.2 399.5 H618.2" stroke="#9c9c9c" fill="none" stroke-width="1.1" />
<path d="M614.2 394.7 L612.6 396.6 H615.8Z M614.2 404.3 L612.6 402.4 H615.8Z M609.5 399.5 L611.4 397.9 V401.1Z M618.9 399.5 L617 397.9 V401.1Z" stroke="none" fill="#9c9c9c" stroke-width="1" />
<path d="M627 394.7 V404 M625 402.5 H634.5 M625 396.6 H631 L634 399.6 V404" stroke="#9c9c9c" fill="none" stroke-width="1.1" />
<rect x="641.8" y="399.3" width="7.9" height="4.8" fill="#9c9c9c" rx="0.6"/>
<path d="M643.3 399.5 V397.8 A2.45 2.45 0 0 1 648.2 397.8 V399.5" stroke="#9c9c9c" fill="none" stroke-width="1.2" />
<text x="683.1" y="403.3" font-size="9" fill="#808080" textLength="19.6" lengthAdjust="spacingAndGlyphs" >塗り :</text>
<rect x="706.8" y="393.7" width="37.3" height="11.8" fill="#2b2b2b" stroke="#3a3a3a" stroke-width="1" rx="2"/>
<rect x="734" y="393.7" width="1" height="11.8" fill="#3a3a3a" />
<text x="709.2" y="402.8" font-size="8" fill="#747474" textLength="19.5" lengthAdjust="spacingAndGlyphs" >100%</text>
<path d="M737 398.5 L739.5 401 L742 398.5" stroke="#6a6a6a" fill="none" stroke-width="1" />
<rect x="547" y="411.5" width="190" height="42" fill="#313131" />
<rect x="547" y="411" width="200" height="1" fill="#262626" />
<rect x="547" y="432.6" width="190" height="1" fill="#282828" />
<rect x="565.8" y="411.5" width="1" height="42" fill="#2a2a2a" />
<rect x="737" y="412" width="10" height="72" fill="#2e2e2e" />
<path d="M552.2 423.5 q4.9-4.6 9.8 0 q-4.9 4.6-9.8 0z" stroke="none" fill="#e8e8e8" stroke-width="1" />
<circle cx="557.1" cy="423.5" r="1.8" fill="#2a2a2a"/>
<path d="M552.2 445.3 q4.9-4.6 9.8 0 q-4.9 4.6-9.8 0z" stroke="none" fill="#e8e8e8" stroke-width="1" />
<circle cx="557.1" cy="445.3" r="1.8" fill="#2a2a2a"/>
<defs><pattern id="chk" x="570.4" y="415.7" width="4.8" height="4.8" patternUnits="userSpaceOnUse"><rect width="4.8" height="4.8" fill="#ffffff"/><rect width="2.4" height="2.4" fill="#d0d0d0"/><rect x="2.4" y="2.4" width="2.4" height="2.4" fill="#d0d0d0"/></pattern></defs>
<rect x="569.9" y="415.2" width="23" height="15.6" fill="#222222" />
<rect x="570.4" y="415.7" width="22" height="14.6" fill="url(#chk)" />
<rect x="569.9" y="437" width="23" height="15.6" fill="#222222" />
<rect x="570.4" y="437.5" width="22" height="14.6" fill="#c1b7ae" />
<text x="600.3" y="426.8" font-size="9.4" fill="#e0e0e0" textLength="33" lengthAdjust="spacingAndGlyphs" >レイヤー 0</text>
<text x="600.3" y="448.6" font-size="9.4" fill="#e0e0e0" textLength="33" lengthAdjust="spacingAndGlyphs" >レイヤー 1</text>
<rect x="547" y="485" width="200" height="15.5" fill="#333333" />
<rect x="547" y="484" width="200" height="1" fill="#2a2a2a" />
<rect x="605" y="490.6" width="5.6" height="4.2" rx="2.1" fill="none" stroke="#7a7a7a" stroke-width="1.1"/><rect x="609.6" y="490.6" width="5.6" height="4.2" rx="2.1" fill="none" stroke="#7a7a7a" stroke-width="1.1"/>
<text x="625.3" y="496.6" font-size="10" fill="#8a8a8a" textLength="7.8" lengthAdjust="spacingAndGlyphs" font-style="italic" font-family="Liberation Serif">fx</text>
<path d="M632 497.6 l1.4 0 l-0.7 0.9z" stroke="none" fill="#8a8a8a" stroke-width="1" />
<rect x="642.8" y="489.4" width="9.5" height="6.4" fill="#9a9a9a" rx="0.6"/>
<circle cx="647.5" cy="492.6" r="1.9" fill="#333333"/>
<circle cx="667" cy="493" r="4.2" fill="none" stroke="#d8d8d8" stroke-width="1.1"/>
<path d="M670 490 A4.2 4.2 0 0 1 664 496 Z" stroke="none" fill="#d8d8d8" stroke-width="1" />
<path d="M670.6 497.6 h2.4 l-1.2 1.4z" stroke="none" fill="#d8d8d8" stroke-width="1" />
<path d="M681.8 489 h3.2 l1 1.2 h4 v5.6 h-8.2z" stroke="none" fill="#d0d0d0" stroke-width="1" />
<rect x="701.3" y="489.3" width="8.4" height="7.6" fill="none" stroke="#d8d8d8" stroke-width="1.1" rx="0.6"/>
<path d="M705.5 491 v4.2 M703.4 493.1 h4.2" stroke="#d8d8d8" fill="none" stroke-width="1.1" />
<path d="M719.8 489.8 h8.2 M722.6 489.6 v-0.9 h2.6 v0.9" stroke="#666666" fill="none" stroke-width="1" />
<path d="M720.6 490.6 h6.6 l-0.6 6.4 h-5.4z" stroke="none" fill="#666666" stroke-width="1" />
</svg></body></html>
